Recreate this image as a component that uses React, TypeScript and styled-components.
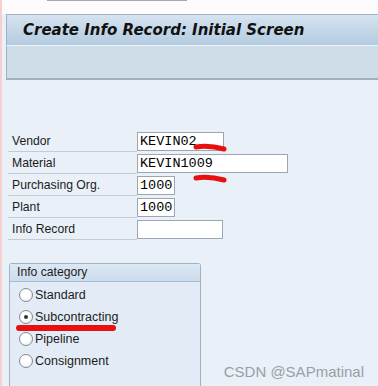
import React from 'react';
import styled, { createGlobalStyle } from 'styled-components';

const GlobalStyle = createGlobalStyle`
  html, body {
    margin: 0;
    padding: 0;
    background: #fdfbfb;
  }
  body {
    font-family: "Liberation Sans", Arial, sans-serif;
  }
`;

const Screen = styled.div`
  position: relative;
  width: 378px;
  height: 386px;
  overflow: hidden;
  box-sizing: border-box;
  border-left: 2px solid #f6cfcf;
  display: flex;
  flex-direction: column;
  background: #e9f0f8;
`;

const TopStrip = styled.div`
  height: 14px;
  background: #fdfbfb;
  display: flex;
  padding-left: 45px;
`;

const TopTab = styled.div`
  width: 140px;
  height: 1px;
  background: #a8a8a8;
`;

const Header = styled.div`
  margin-left: 4px;
  background: #fdfbfb;
  display: flex;
  flex-direction: column;
`;

const TitleBar = styled.div`
  height: 30px;
  border-top: 1px solid #9fb0c0;
  border-left: 1px solid #9fb0c0;
  background: linear-gradient(#d6e3f0, #b3cbe0);
  display: flex;
  align-items: center;
  padding-left: 16px;
`;

const Title = styled.h1`
  margin: 0;
  font-family: "DejaVu Sans", Verdana, sans-serif;
  font-size: 15px;
  font-weight: bold;
  font-style: italic;
  color: #111;
`;

const Toolbar = styled.div`
  height: 32px;
  border-top: 1px solid #eef3f8;
  border-left: 1px solid #9fb0c0;
  border-bottom: 2px solid #9fb0c0;
  background: #cfdde9;
`;

const Body = styled.div`
  flex: 1;
  display: flex;
  flex-direction: column;
  padding: 52px 0 0 6px;
`;

const Form = styled.div`
  display: flex;
  flex-direction: column;
  gap: 3px;
`;

const Row = styled.div`
  display: flex;
  align-items: flex-start;
  height: 19px;
`;

const Label = styled.div`
  width: 129px;
  height: 20px;
  box-sizing: border-box;
  padding-left: 4px;
  font-size: 12.2px;
  line-height: 19px;
  color: #1c1c1c;
  border-bottom: 1px solid #c3ccd6;
`;

const Input = styled.div<{ $w: number }>`
  width: ${(p) => p.$w}px;
  height: 19px;
  box-sizing: border-box;
  background: #fff;
  border: 1px solid #9aa6b2;
  padding-left: 2px;
  font-family: "Liberation Mono", "Courier New", monospace;
  font-size: 13.5px;
  line-height: 17px;
  color: #000;
  position: relative;
`;

const Mark = styled.svg`
  position: absolute;
  pointer-events: none;
`;

const Group = styled.div`
  margin-top: 24px;
  margin-left: 1px;
  width: 190px;
  flex: 1;
  border: 1px solid #9fb3c7;
  border-bottom: none;
  border-radius: 3px 3px 0 0;
  background: #e3ecf6;
  display: flex;
  flex-direction: column;
`;

const GroupHead = styled.div`
  height: 17px;
  padding-left: 7px;
  font-size: 12.2px;
  line-height: 16px;
  color: #1c1c1c;
  background: linear-gradient(#dce8f4, #cddcec);
  border-bottom: 1px solid #a9bdd0;
`;

const Options = styled.div`
  display: flex;
  flex-direction: column;
  gap: 6px;
  padding: 5px 0 0 9px;
`;

const Option = styled.label`
  display: flex;
  align-items: center;
  height: 16px;
  font-size: 12.5px;
  color: #1c1c1c;
  position: relative;
`;

const Radio = styled.span<{ $on?: boolean }>`
  width: 12px;
  height: 12px;
  border-radius: 50%;
  border: 1px solid #7f8a94;
  background: radial-gradient(circle at 40% 40%, #fff 40%, #e2e6ea);
  margin-right: 2px;
  display: flex;
  align-items: center;
  justify-content: center;
  &::after {
    content: '';
    width: 4px;
    height: 4px;
    border-radius: 50%;
    background: ${(p) => (p.$on ? '#333' : 'transparent')};
  }
`;

const Underline = styled.span`
  position: absolute;
  left: -3px;
  top: 16px;
  width: 100px;
  height: 6px;
  border-radius: 3px;
  background: #e8100f;
`;

const Watermark = styled.div`
  position: absolute;
  right: 14px;
  bottom: 6px;
  font-size: 15px;
  color: #9a9fa6;
`;

const fields = [
  { label: 'Vendor', value: 'KEVIN02', w: 87, mark: true },
  { label: 'Material', value: 'KEVIN1009', w: 151, mark: true },
  { label: 'Purchasing Org.', value: '1000', w: 38 },
  { label: 'Plant', value: '1000', w: 38 },
  { label: 'Info Record', value: '', w: 86 },
];

const categories = ['Standard', 'Subcontracting', 'Pipeline', 'Consignment'];

const App: React.FC = () => {
  return (
    <>
      <GlobalStyle />
      <Screen>
        <TopStrip>
          <TopTab />
        </TopStrip>
        <Header>
          <TitleBar>
            <Title>Create Info Record: Initial Screen</Title>
          </TitleBar>
          <Toolbar />
        </Header>
        <Body>
          <Form>
            {fields.map((f, i) => (
              <Row key={f.label}>
                <Label>{f.label}</Label>
                <Input $w={f.w}>
                  {f.value}
                  {f.mark && (
                    <Mark
                      width="34"
                      height="10"
                      viewBox="0 0 34 10"
                      style={{ left: 55, top: i === 0 ? 10 : 19 }}
                    >
                      <path
                        d="M3 4 Q16 2 31 6"
                        stroke="#e8100f"
                        strokeWidth="5"
                        strokeLinecap="round"
                        fill="none"
                      />
                    </Mark>
                  )}
                </Input>
              </Row>
            ))}
          </Form>
          <Group>
            <GroupHead>Info category</GroupHead>
            <Options>
              {categories.map((c) => (
                <Option key={c}>
                  <Radio $on={c === 'Subcontracting'} />
                  {c}
                  {c === 'Subcontracting' && <Underline />}
                </Option>
              ))}
            </Options>
          </Group>
        </Body>
        <Watermark>CSDN @SAPmatinal</Watermark>
      </Screen>
    </>
  );
};

export default App;
